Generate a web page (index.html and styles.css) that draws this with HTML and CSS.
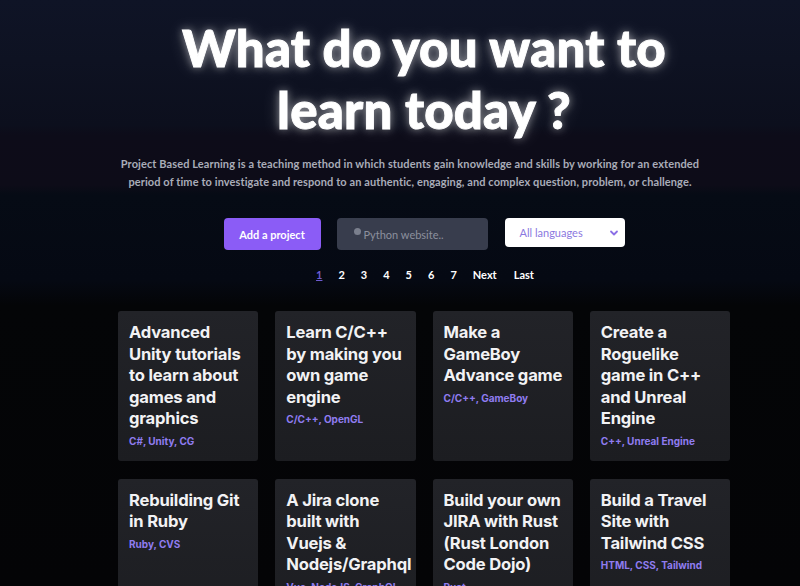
FILE: index.html
```html
<!DOCTYPE html>
<html>
<head>
<meta charset="utf-8">
<link rel="stylesheet" href="styles.css">
</head>
<body>
<div class="page">
  <header class="hero">
    <h1 class="title">What do you want to<br>learn today ?</h1>
    <p class="intro">Project Based Learning is a teaching method in which students gain knowledge and skills by working for an extended<br>period of time to investigate and respond to an authentic, engaging, and complex question, problem, or challenge.</p>
    <div class="controls">
      <button class="add-btn">Add a project</button>
      <div class="search"><span class="search-dot"></span><span class="placeholder">Python website..</span></div>
      <div class="select"><span>All languages</span>
        <svg class="chev" width="10" height="10" viewBox="0 0 10 10"><path d="M2 3.5 L5 6.5 L8 3.5" fill="none" stroke="#8b6fe6" stroke-width="1.8" stroke-linecap="round" stroke-linejoin="round"/></svg>
      </div>
    </div>
    <nav class="pager">
      <a class="pg current">1</a><a class="pg">2</a><a class="pg">3</a><a class="pg">4</a><a class="pg">5</a><a class="pg">6</a><a class="pg">7</a><a class="pg word">Next</a><a class="pg word">Last</a>
    </nav>
  </header>
  <main class="grid">
    <div class="card"><h2>Advanced Unity tutorials to learn about games and graphics</h2><p class="tags">C#, Unity, CG</p></div>
    <div class="card"><h2>Learn C/C++ by making you own game engine</h2><p class="tags">C/C++, OpenGL</p></div>
    <div class="card"><h2>Make a GameBoy Advance game</h2><p class="tags">C/C++, GameBoy</p></div>
    <div class="card"><h2>Create a Roguelike game in C++ and Unreal Engine</h2><p class="tags">C++, Unreal Engine</p></div>
    <div class="card"><h2>Rebuilding Git in Ruby</h2><p class="tags">Ruby, CVS</p></div>
    <div class="card"><h2>A Jira clone built with Vuejs &amp; Nodejs/Graphql</h2><p class="tags">Vue, NodeJS, GraphQL</p></div>
    <div class="card"><h2>Build your own JIRA with Rust (Rust London Code Dojo)</h2><p class="tags">Rust</p></div>
    <div class="card"><h2>Build a Travel Site with Tailwind CSS</h2><p class="tags">HTML, CSS, Tailwind</p></div>
  </main>
</div>
</body>
</html>
```
FILE: styles.css
```css
html, body {
  margin: 0;
  padding: 0;
}
body {
  width: 800px;
  height: 586px;
  overflow: hidden;
  background: linear-gradient(180deg, #0f1426 0px, #0e1222 60px, #0c0f1d 125px, #0d0c19 135px, #0d0c18 185px, #060b15 195px, #050913 280px, #040507 305px, #040406 586px);
  font-family: "Inter", "Noto Sans", sans-serif;
}
.page {
  padding-left: 48px;
}
.hero {
  display: flex;
  flex-direction: column;
  align-items: center;
}
.title {
  margin: 17px 0 0;
  font-family: "Lato", "Inter", sans-serif;
  font-weight: 900;
  font-size: 51px;
  line-height: 62px;
  color: #ffffff;
  text-align: center;
  letter-spacing: 0.2px;
  -webkit-text-stroke: 0.9px #ffffff;
  text-shadow: 0 0 8px rgba(255,255,255,0.55), 0 0 18px rgba(255,255,255,0.25);
}
.intro {
  margin: 14px 28px 0 0;
  font-family: "Lato", sans-serif;
  font-weight: 700;
  font-size: 11px;
  line-height: 18px;
  color: #a9acb8;
  text-align: center;
  letter-spacing: 0.1px;
}
.controls {
  margin-top: 27px;
  display: flex;
  gap: 16px;
  height: 32px;
}
.add-btn {
  width: 97px;
  height: 32px;
  border: 0;
  border-radius: 4px;
  background: #8b5cf6;
  color: #fff;
  font-family: "Lato", sans-serif;
  font-weight: 700;
  font-size: 11px;
  padding: 0;
}
.search {
  width: 151px;
  height: 32px;
  border-radius: 4px;
  background: #383d4d;
  display: flex;
  align-items: center;
  padding-left: 16px;
  box-sizing: border-box;
  position: relative;
}
.search-dot {
  position: absolute;
  left: 17px;
  top: 10px;
  width: 7px;
  height: 7px;
  border-radius: 50%;
  background: #7a7f8d;
}
.placeholder {
  margin-left: 11px;
  font-family: "Lato", sans-serif;
  font-size: 11px;
  color: #8c909d;
}
.select {
  width: 120px;
  height: 29px;
  margin-left: 1px;
  border-radius: 4px;
  background: #ffffff;
  display: flex;
  align-items: center;
  justify-content: space-between;
  padding: 0 6px 0 15px;
  box-sizing: border-box;
  font-family: "Lato", sans-serif;
  font-size: 11px;
  color: #8b78e0;
}
.pager {
  margin-top: 18px;
  display: flex;
  font-family: "Lato", sans-serif;
  font-weight: 700;
  font-size: 11px;
  line-height: 14px;
  color: #ffffff;
  padding-left: 2px;
}
.pg {
  margin-right: 16px;
}
.pg.current {
  color: #6d5bd0;
  text-decoration: underline;
}
.pg.word {
  margin-right: 17px;
}
.pg.word:last-child {
  margin-right: 0;
}
.grid {
  margin: 29px 0 0 70px;
  width: 612px;
  display: grid;
  grid-template-columns: repeat(4, minmax(0, 1fr));
  column-gap: 17px;
  row-gap: 18px;
}
.card {
  background: linear-gradient(180deg, #222328 0%, #1c1d21 100%);
  border-radius: 3px;
  padding: 11px 8px 13px 11px;
  min-height: 149px;
  box-sizing: border-box;
  min-width: 0;
}
.card h2 {
  margin: 0;
  font-family: "Inter", sans-serif;
  font-weight: 700;
  font-size: 16.6px;
  line-height: 21.5px;
  color: #f2f2f4;
  letter-spacing: -0.2px;
}
.tags {
  margin: 4px 0 0;
  font-family: "Inter", sans-serif;
  font-weight: 700;
  font-size: 10px;
  line-height: 14px;
  color: #8f7cf0;
}
```
